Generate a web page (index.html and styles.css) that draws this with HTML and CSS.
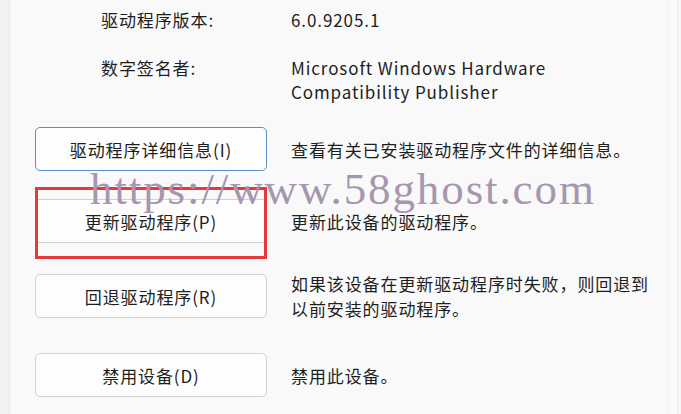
FILE: index.html
```html
<!DOCTYPE html>
<html lang="zh-CN">
<head>
<meta charset="utf-8">
<link rel="stylesheet" href="styles.css">
</head>
<body>
<div class="window">
  <div class="edge-left"></div>
  <div class="content">
    <div class="info">
      <div class="label">驱动程序版本:</div>
      <div class="value">6.0.9205.1</div>
      <div class="label">数字签名者:</div>
      <div class="value">Microsoft Windows Hardware<br>Compatibility Publisher</div>
    </div>
    <div class="actions">
      <div class="btn-cell"><button class="btn btn-focus">驱动程序详细信息(I)</button></div>
      <div class="desc">查看有关已安装驱动程序文件的详细信息。</div>

      <div class="btn-cell highlight-cell"><button class="btn btn-flat">更新驱动程序(P)</button><div class="highlight"></div></div>
      <div class="desc">更新此设备的驱动程序。</div>

      <div class="btn-cell"><button class="btn">回退驱动程序(R)</button></div>
      <div class="desc">如果该设备在更新驱动程序时失败，则回退到<br>以前安装的驱动程序。</div>

      <div class="btn-cell last"><button class="btn">禁用设备(D)</button></div>
      <div class="desc last">禁用此设备。</div>
    </div>
  </div>
  <div class="edge-right"></div>
  <div class="watermark">https://www.58ghost.com</div>
</div>
</body>
</html>
```
FILE: styles.css
```css
html, body {
  margin: 0;
  padding: 0;
  background: #f9f9f9;
}
.window {
  position: relative;
  width: 681px;
  height: 414px;
  display: flex;
  overflow: hidden;
  background: #f9f9f9;
  font-family: "Noto Sans CJK SC", "Noto Sans", sans-serif;
  font-size: 17px;
  letter-spacing: 0.9px;
  color: #1e1e1e;
}
.edge-left {
  width: 9px;
  flex: none;
  background: #f1f1f1;
  border-right: 1px solid #e6e6e6;
}
.content {
  flex: 1;
  padding: 8px 0 0 25px;
}
.edge-right {
  width: 12px;
  flex: none;
  border-left: 1px solid #efefef;
  background: linear-gradient(to right, #fafafa 0 8px, #ececec 8px 9px, #f6f6f6 9px);
}
.info {
  display: grid;
  grid-template-columns: 190px 1fr;
  row-gap: 24px;
  padding-left: 66px;
  line-height: 24px;
}
.actions {
  margin-top: 23px;
  display: grid;
  grid-template-columns: 232px 1fr;
  column-gap: 24px;
  row-gap: 28px;
  align-items: center;
}
.btn-cell {
  position: relative;
}
.btn-cell.last, .desc.last {
  margin-top: 4px;
}
.btn {
  display: block;
  width: 232px;
  height: 44px;
  background: #fdfdfd;
  border: 1px solid #d3d3d3;
  border-radius: 5px;
  font-family: inherit;
  font-size: 17px;
  letter-spacing: 0.9px;
  color: #1e1e1e;
  padding: 0;
}
.btn-focus {
  border: 1.5px solid #5b8fcc;
}
.btn-flat {
  border-radius: 0;
  border-left: none;
  border-right: none;
  border-color: #cfcfd4;
}
.highlight {
  position: absolute;
  left: 0;
  right: 0;
  top: -12px;
  bottom: -16px;
  border: 3px solid #e43a3c;
  pointer-events: none;
}
.desc {
  line-height: 25px;
}
.watermark {
  position: absolute;
  left: 90px;
  top: 167px;
  font-family: "Liberation Serif", serif;
  font-size: 45px;
  line-height: 45px;
  letter-spacing: 1.9px;
  color: #a796b0;
  white-space: nowrap;
}
```
